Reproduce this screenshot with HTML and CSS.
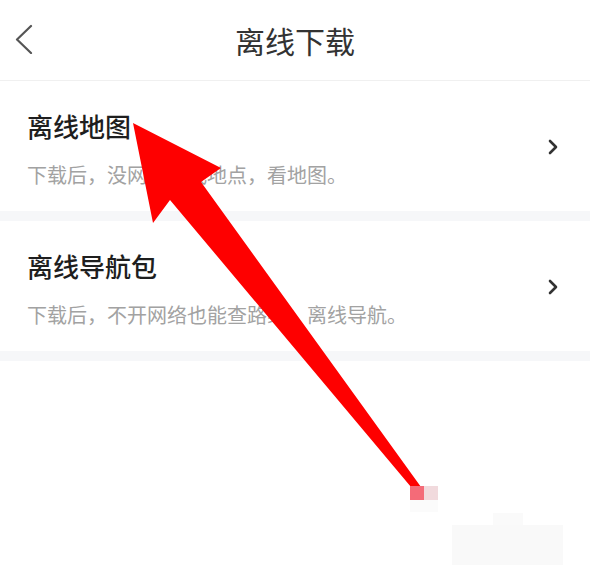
FILE: index.html
```html
<!DOCTYPE html>
<html lang="zh-CN">
<head>
<meta charset="utf-8">
<title>离线下载</title>
<link rel="stylesheet" href="styles.css">
</head>
<body>
<div class="page">
  <header class="nav">
    <svg class="back" width="20" height="30" viewBox="0 0 20 30">
      <polyline points="16,2 2,15.5 16,29" fill="none" stroke="#555" stroke-width="2.2" stroke-linecap="round" stroke-linejoin="round"/>
    </svg>
    <h1 class="nav-title">离线下载</h1>
  </header>

  <div class="item">
    <div class="item-text">
      <div class="item-title">离线地图</div>
      <div class="item-desc">下载后，没网也能找地点，看地图。</div>
    </div>
    <svg class="chev" width="10" height="16" viewBox="0 0 10 16">
      <polyline points="2,2 8,8 2,14" fill="none" stroke="#333" stroke-width="2.6" stroke-linecap="round" stroke-linejoin="round"/>
    </svg>
  </div>
  <div class="gap"></div>
  <div class="item">
    <div class="item-text">
      <div class="item-title">离线导航包</div>
      <div class="item-desc">下载后，不开网络也能查路线，离线导航。</div>
    </div>
    <svg class="chev" width="10" height="16" viewBox="0 0 10 16">
      <polyline points="2,2 8,8 2,14" fill="none" stroke="#333" stroke-width="2.6" stroke-linecap="round" stroke-linejoin="round"/>
    </svg>
  </div>
  <div class="gap"></div>

  <svg class="overlay" width="590" height="578" viewBox="0 0 590 578">
    <rect x="452" y="525" width="111" height="40" fill="#f9f9f9"/>
    <rect x="493" y="513" width="30" height="12" fill="#fafafa"/>
    <rect x="410" y="500" width="28" height="12" fill="#fbfbfb"/>
    <polygon points="133,123 221,168 201,182 421,487 411,487 170,200 153,223" fill="#fe0000"/>
    <rect x="410" y="486" width="14" height="14" fill="#f46b78"/>
    <rect x="424" y="486" width="14" height="14" fill="#f1dadd"/>
  </svg>
</div>
</body>
</html>
```

FILE: styles.css
```css
html, body {
  margin: 0;
  padding: 0;
  background: #ffffff;
}

body {
  font-family: "Noto Sans CJK SC", "Noto Sans", "Liberation Sans", sans-serif;
}

.page {
  position: relative;
  width: 590px;
  height: 578px;
  overflow: hidden;
  background: #ffffff;
}

.nav {
  height: 80px;
  border-bottom: 1px solid #f0f0f0;
  display: flex;
  align-items: center;
  justify-content: center;
  position: relative;
}

.back {
  position: absolute;
  left: 15px;
  top: 24px;
}

.nav-title {
  margin: 0;
  font-size: 30px;
  font-weight: 400;
  color: #333333;
  line-height: 40px;
}

.item {
  display: flex;
  align-items: center;
  justify-content: space-between;
  padding: 30px 32px 21px 27px;
}

.item-text {
  display: flex;
  flex-direction: column;
  gap: 19px;
}

.item-title {
  font-size: 26px;
  line-height: 30px;
  color: #1e1e1e;
  font-weight: 500;
}

.item-desc {
  font-size: 20px;
  line-height: 30px;
  color: #a2a2a2;
}

.chev {
  display: block;
  margin-top: -8px;
}

.gap {
  height: 10px;
  background: #f6f7f9;
}

.overlay {
  position: absolute;
  left: 0;
  top: 0;
  pointer-events: none;
}
```
